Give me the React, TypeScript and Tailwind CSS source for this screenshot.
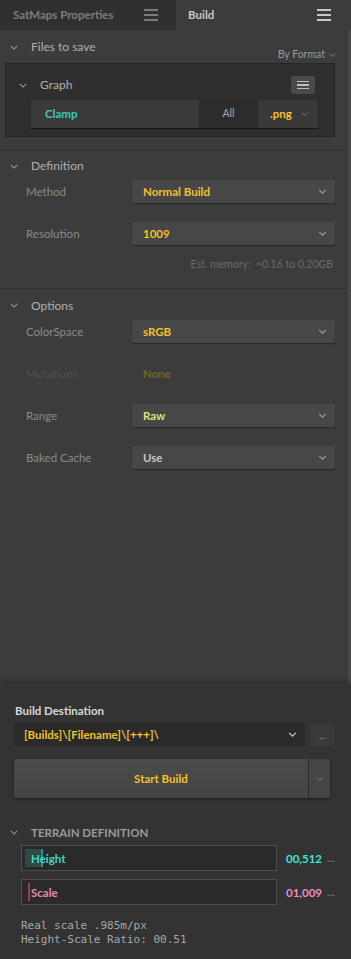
import React from "react";

const Burger = ({ className = "" }: { className?: string }) => (
  <div className={`flex flex-col gap-[3px] ${className}`}>
    <span className="block h-[2px] w-[14px] bg-current" />
    <span className="block h-[2px] w-[14px] bg-current" />
    <span className="block h-[2px] w-[14px] bg-current" />
  </div>
);

const Chevron = ({ className = "" }: { className?: string }) => (
  <svg viewBox="0 0 10 6" className={className} fill="none" stroke="currentColor" strokeWidth="1.3">
    <path d="M1 1l4 4 4-4" />
  </svg>
);

const SectionHeader = ({ title }: { title: string }) => (
  <div className="flex h-[28px] items-center">
    <Chevron className="ml-[10px] h-[5px] w-[8px] text-[#9a9a9a]" />
    <span className="ml-[13px] text-[12px] text-[#b0b0b0]">{title}</span>
  </div>
);

const SelectRow = ({
  label,
  value,
  valueClass = "text-[#f2c12e]",
}: {
  label: string;
  value: string;
  valueClass?: string;
}) => (
  <div className="flex h-[23px] items-center">
    <span className="ml-[26px] w-[106px] text-[11.5px] text-[#8a8a8a]">{label}</span>
    <div className="flex h-[23px] w-[203px] items-center justify-between rounded-[2px] bg-[#474747] pl-[11px] pr-[8px] shadow-[0_1px_1px_rgba(0,0,0,0.35)]">
      <span className={`text-[11.5px] font-bold ${valueClass}`}>{value}</span>
      <Chevron className="h-[5px] w-[9px] text-[#a0a0a0]" />
    </div>
  </div>
);

export default function App() {
  return (
    <div
      className="flex h-[959px] w-[351px] flex-col bg-[#3c3c3c]"
      style={{ fontFamily: 'Lato, "Noto Sans", sans-serif' }}
    >
      {/* Tabs */}
      <div className="flex h-[30px] shrink-0">
        <div className="flex w-[176px] items-center justify-between bg-[#303030] pl-[13px] pr-[18px]">
          <span className="text-[11.5px] font-bold text-[#7d7d7d]">SatMaps Properties</span>
          <Burger className="text-[#7a7a7a]" />
        </div>
        <div className="flex flex-1 items-center justify-between pl-[12px] pr-[20px]">
          <span className="text-[11.5px] font-bold text-[#c8c8c8]">Build</span>
          <Burger className="text-[#c8c8c8]" />
        </div>
      </div>

      <div className="flex flex-1">
        <div className="flex flex-1 flex-col">
          {/* Files to save */}
          <div className="flex h-[33px] items-start justify-between pt-[6px]">
            <div className="flex h-[22px] items-center">
              <Chevron className="ml-[10px] h-[5px] w-[8px] text-[#9a9a9a]" />
              <span className="ml-[13px] text-[12px] text-[#b0b0b0]">Files to save</span>
            </div>
            <div className="mr-[12px] mt-[11px] flex items-center gap-[4px]">
              <span className="text-[10.5px] text-[#9a9a9a]">By Format</span>
              <Chevron className="h-[4px] w-[7px] text-[#8a8a8a]" />
            </div>
          </div>

          <div className="ml-[5px] w-[330px] border border-[#262626] bg-[#2f2f2f] pb-[8px]">
            <div className="flex h-[36px] items-center justify-between pt-[6px]">
              <div className="flex items-center">
                <Chevron className="ml-[13px] h-[5px] w-[8px] text-[#a0a0a0]" />
                <span className="ml-[13px] text-[12px] text-[#b0b0b0]">Graph</span>
              </div>
              <div className="mr-[19px] flex h-[18px] w-[24px] items-center justify-center rounded-[3px] bg-[#4a4a4a]">
                <div className="flex flex-col gap-[2px]">
                  <span className="block h-[1.5px] w-[12px] bg-[#bdbdbd]" />
                  <span className="block h-[1.5px] w-[12px] bg-[#bdbdbd]" />
                  <span className="block h-[1.5px] w-[12px] bg-[#bdbdbd]" />
                </div>
              </div>
            </div>
            <div className="ml-[25px] flex h-[28px] w-[287px] shadow-[0_1px_1px_rgba(0,0,0,0.5)]">
              <div className="flex w-[168px] items-center bg-[#3a3a3a] pl-[14px]">
                <span className="text-[11.5px] font-bold text-[#3ec6c6]">Clamp</span>
              </div>
              <div className="flex w-[59px] items-center justify-center bg-[#2c2c2c]">
                <span className="text-[10.5px] text-[#a8a8a8]">All</span>
              </div>
              <div className="flex flex-1 items-center justify-between bg-[#393939] pl-[12px] pr-[10px]">
                <span className="text-[11.5px] font-bold text-[#f2c12e]">.png</span>
                <Chevron className="h-[4px] w-[7px] text-[#8a8a8a]" />
              </div>
            </div>
          </div>

          <div className="mt-[13px] h-px bg-[#303030]" />

          {/* Definition */}
          <div className="mt-[1px]">
            <SectionHeader title="Definition" />
          </div>
          <SelectRow label="Method" value="Normal Build" />
          <div className="h-[19px]" />
          <SelectRow label="Resolution" value="1009" />
          <div className="mr-[15px] mt-[12px] text-right text-[10.5px] text-[#6a6a6a]">
            Est. memory:&nbsp; ~0.16 to 0.20GB
          </div>

          <div className="mt-[15px] h-px bg-[#303030]" />

          {/* Options */}
          <div className="mt-[3px]">
            <SectionHeader title="Options" />
          </div>
          <div className="flex flex-col gap-[19px]">
            <SelectRow label="ColorSpace" value="sRGB" />
            <div className="flex h-[23px] items-center">
              <span className="ml-[26px] w-[106px] text-[11.5px] text-[#505050]">Mutations</span>
              <span className="pl-[11px] text-[11.5px] font-bold text-[#756528]">None</span>
            </div>
            <SelectRow label="Range" value="Raw" valueClass="text-[#d6e27a]" />
            <SelectRow label="Baked Cache" value="Use" valueClass="text-[#c4c4c4]" />
          </div>
        </div>
        <div className="w-[3px] bg-[#474747]" />
      </div>

      {/* Bottom panel */}
      <div className="h-[275px] shrink-0 bg-[#333333] shadow-[0_-3px_6px_rgba(0,0,0,0.25)]">
        <div className="ml-[15px] mt-[18px] text-[11.5px] font-bold text-[#d8d8d8]">Build Destination</div>
        <div className="ml-[14px] mt-[4px] flex h-[23px] items-center gap-[6px]">
          <div className="flex h-[23px] w-[291px] items-center justify-between bg-[#2a2a2a] pl-[10px] pr-[8px]">
            <span className="text-[11.5px] font-bold text-[#f2c12e]">[Builds]\[Filename]\[+++]\</span>
            <Chevron className="h-[5px] w-[9px] text-[#d0d0d0]" />
          </div>
          <div className="flex h-[22px] w-[23px] items-center justify-center bg-[#3a3a3a] text-[10px] leading-none text-[#8a8a8a]">
            ...
          </div>
        </div>
        <div className="ml-[14px] mt-[13px] flex h-[39px] w-[316px] shadow-[0_1px_2px_rgba(0,0,0,0.5)]">
          <div className="flex flex-1 items-center justify-center rounded-l-[3px] bg-gradient-to-b from-[#4b4b4b] to-[#444444]">
            <span className="text-[11.5px] font-bold text-[#f2c12e]">Start Build</span>
          </div>
          <div className="w-px bg-[#2a2a2a]" />
          <div className="flex w-[21px] items-center justify-center rounded-r-[3px] bg-[#454545]">
            <Chevron className="h-[4px] w-[7px] text-[#8a8a8a]" />
          </div>
        </div>

        {/* Terrain definition */}
        <div className="mt-[25px] flex h-[18px] items-center">
          <Chevron className="ml-[10px] h-[5px] w-[8px] text-[#9a9a9a]" />
          <span className="ml-[13px] text-[11.5px] font-bold text-[#9a9a9a]">TERRAIN DEFINITION</span>
        </div>

        <div className="mt-[4px] flex items-center">
          <div className="relative ml-[21px] flex h-[26px] w-[256px] items-center border border-[#4e4e4e] bg-[#2a2a2a]">
            <div className="absolute left-[3px] top-[3px] h-[18px] w-[16px] bg-[#2e4a45]" />
            <div className="absolute left-[19px] top-[3px] h-[18px] w-[2px] bg-[#2f8f80]" />
            <span className="relative ml-[9px] text-[11.5px] font-bold text-[#3fd8c4]">Height</span>
          </div>
          <span className="ml-[9px] text-[11.5px] font-bold text-[#3fe3d5]">00,512</span>
          <span className="ml-[5px] text-[11px] text-[#8a8a8a]">...</span>
        </div>

        <div className="mt-[8px] flex items-center">
          <div className="relative ml-[21px] flex h-[26px] w-[256px] items-center border border-[#4e4e4e] bg-[#2a2a2a]">
            <div className="absolute left-[6px] top-[3px] h-[18px] w-[2px] bg-[#8a4660]" />
            <span className="relative ml-[9px] text-[11.5px] font-bold text-[#e58cb8]">Scale</span>
          </div>
          <span className="ml-[9px] text-[11.5px] font-bold text-[#ee8cc0]">01,009</span>
          <span className="ml-[5px] text-[11px] text-[#8a8a8a]">...</span>
        </div>

        <div
          className="ml-[21px] mt-[14px] text-[11px] leading-[14px] text-[#a8a8a8]"
          style={{ fontFamily: '"DejaVu Sans Mono", "Liberation Mono", monospace' }}
        >
          <div>Real scale .985m/px</div>
          <div>Height-Scale Ratio: 00.51</div>
        </div>
      </div>
    </div>
  );
}
